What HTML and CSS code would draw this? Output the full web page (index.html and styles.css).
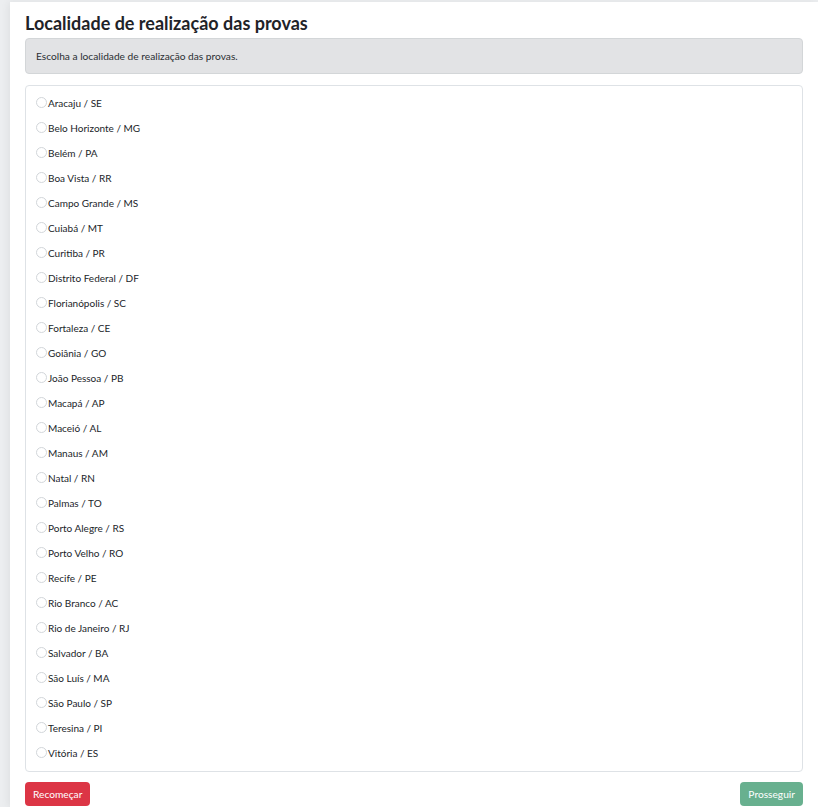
FILE: index.html
```html
<!DOCTYPE html>
<html lang="pt-BR">
<head>
  <meta charset="UTF-8" />
  <title>Localidade de realização das provas</title>
  <link rel="stylesheet" href="styles.css">
</head>
<body>

  <main class="pagina">
    <h2 class="titulo">Localidade de realização das provas</h2>

    <div class="aviso">
      Escolha a localidade de realização das provas.
    </div>

    <form class="lista-locais" id="lista-locais">
      <!-- Localidades inseridas via JS -->
    </form>

    <div class="acoes">
      <button class="btn btn-recomecar" type="button">Recomeçar</button>
      <button class="btn btn-prosseguir" type="button" disabled>Prosseguir</button>
    </div>
  </main>

  <script>
    const locais = [
      'Aracaju / SE', 'Belo Horizonte / MG', 'Belém / PA', 'Boa Vista / RR',
      'Campo Grande / MS', 'Cuiabá / MT', 'Curitiba / PR', 'Distrito Federal / DF',
      'Florianópolis / SC', 'Fortaleza / CE', 'Goiânia / GO', 'João Pessoa / PB',
      'Macapá / AP', 'Maceió / AL', 'Manaus / AM', 'Natal / RN', 'Palmas / TO',
      'Porto Alegre / RS', 'Porto Velho / RO', 'Recife / PE', 'Rio Branco / AC',
      'Rio de Janeiro / RJ', 'Salvador / BA', 'São Luís / MA', 'São Paulo / SP',
      'Teresina / PI', 'Vitória / ES'
    ];

    const lista = document.getElementById('lista-locais');

    locais.forEach((nome, index) => {
      const label = document.createElement('label');
      label.className = 'local';
      label.innerHTML = `<input type="radio" name="local" value="${index}"> <span>${nome}</span>`;
      lista.appendChild(label);
    });
  </script>
</body>
</html>
```

FILE: styles.css
```css
body {
  font-family: Lato, "Open Sans", Arial, sans-serif;
  margin: 0;
  background-color: #eceef0;
  color: #212529;
}

.pagina {
  margin: 2px 0 0 10px;
  background: white;
  padding: 9px 15px 2px 15px;
  min-height: 805px;
  box-sizing: border-box;
  box-shadow: -2px 0 8px rgba(0,0,0,0.06);
}

.titulo {
  font-size: 18px;
  font-weight: 700;
  margin: 0 0 2px 0;
  line-height: 25px;
  color: #1f2328;
}

.aviso {
  background-color: #e2e3e5;
  border: 1px solid #d3d6d8;
  border-radius: 4px;
  color: #2b2f33;
  font-size: 10.2px;
  padding: 11px 10px;
  line-height: 12px;
  margin-bottom: 11px;
}

.lista-locais {
  border: 1px solid #dee2e6;
  border-radius: 4px;
  padding: 4px 10px 6px 10px;
  display: flex;
  flex-direction: column;
}

.local {
  display: flex;
  align-items: center;
  height: 25px;
  font-size: 10px;
  color: #212529;
}

.local input {
  appearance: none;
  width: 11px;
  height: 11px;
  margin: 0 1px 0 0;
  border: 1px solid #d2d6da;
  border-radius: 50%;
  background: white;
  box-sizing: border-box;
}

.acoes {
  display: flex;
  justify-content: space-between;
  margin-top: 10px;
}

.btn {
  font-family: inherit;
  font-size: 10.2px;
  color: white;
  border: none;
  border-radius: 4px;
  padding: 6px 8px;
  line-height: 12px;
  cursor: pointer;
}

.btn-recomecar {
  background-color: #dc3545;
}

.btn-prosseguir {
  background-color: #198754;
  opacity: 0.65;
  cursor: default;
}
```
